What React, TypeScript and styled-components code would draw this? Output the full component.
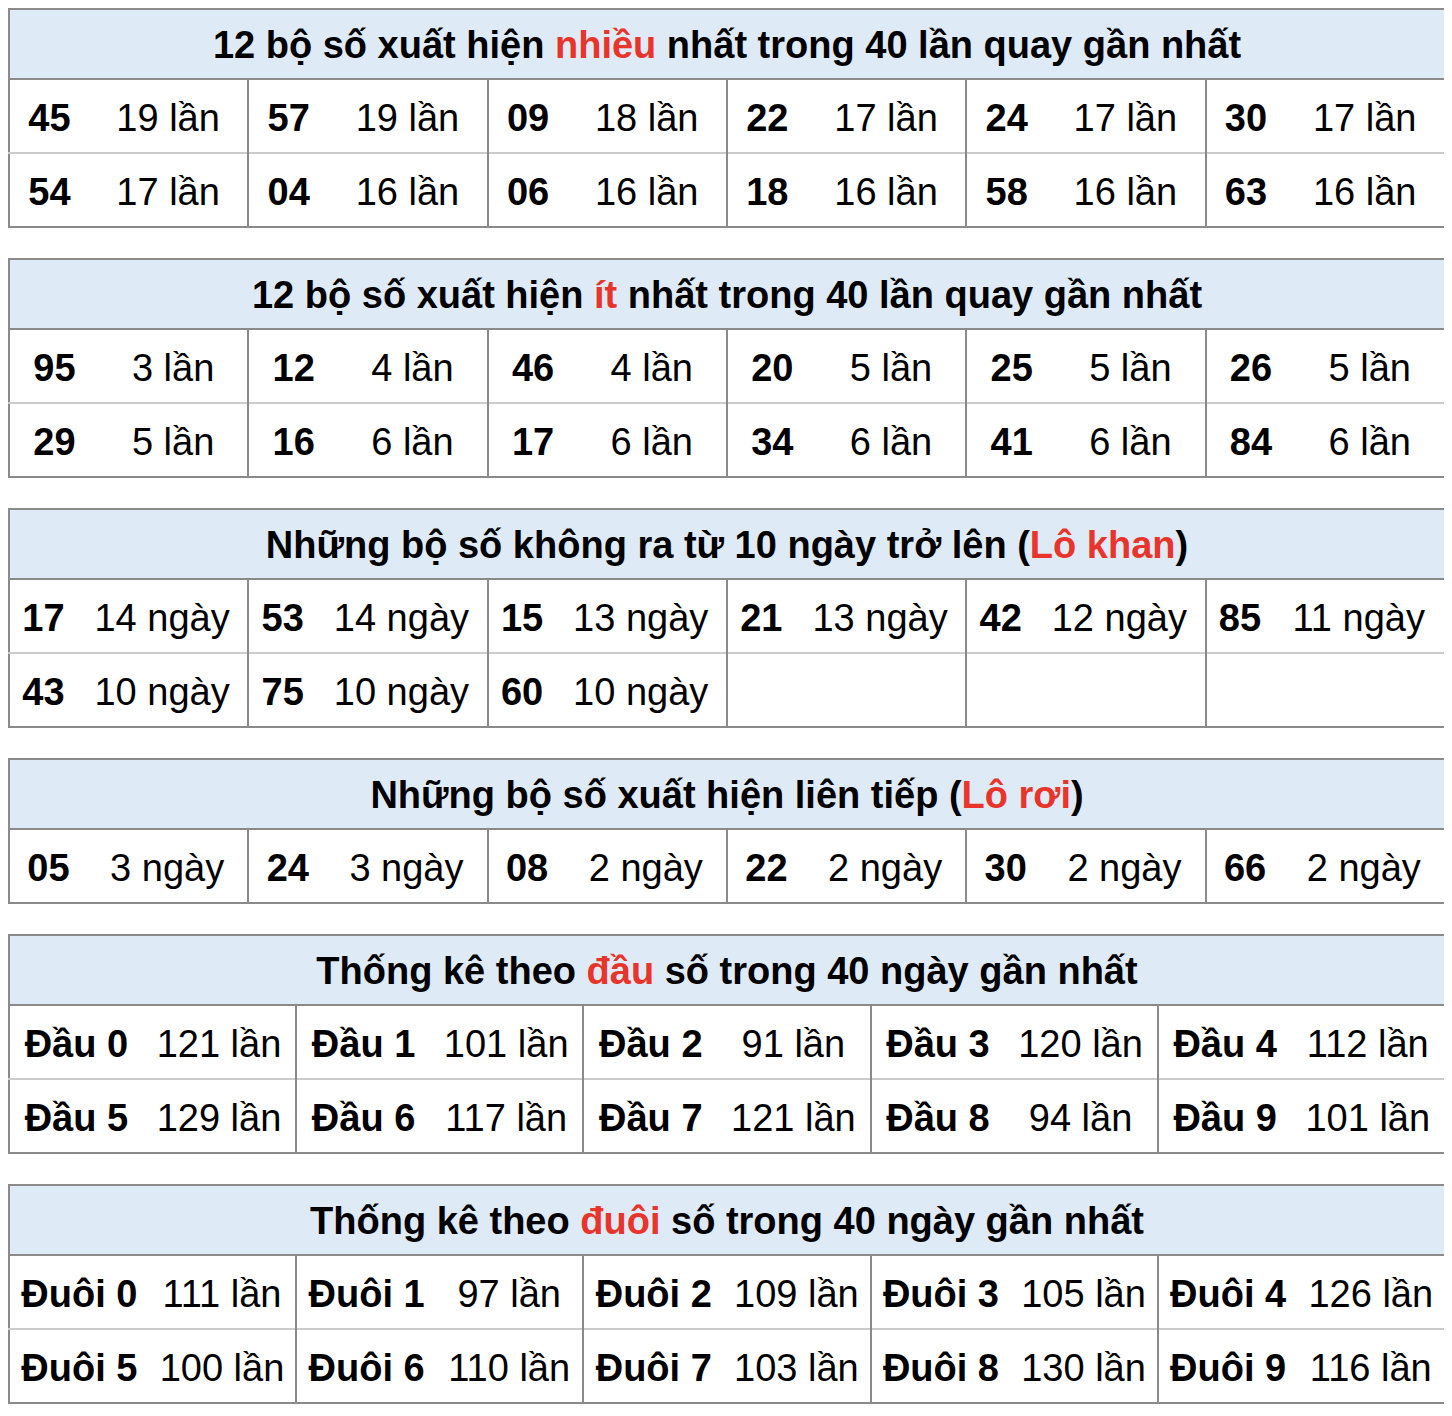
import React from "react";
import styled, { createGlobalStyle } from "styled-components";

const GlobalStyle = createGlobalStyle`
  body {
    margin: 8px;
    background: #ffffff;
    font-family: "Liberation Sans", Arial, sans-serif;
    color: #000000;
  }
`;

type Entry = [string, string] | null;

interface StatTable {
  before: string;
  red: string;
  after: string;
  numWidth: number; // px of the group given to the number cell
  rows: Entry[][];
}

const lan = (n: number) => `${n} lần`;
const ngay = (n: number) => `${n} ngày`;

const tables: StatTable[] = [
  {
    before: "12 bộ số xuất hiện ",
    red: "nhiều",
    after: " nhất trong 40 lần quay gần nhất",
    numWidth: 80,
    rows: [
      [["45", lan(19)], ["57", lan(19)], ["09", lan(18)], ["22", lan(17)], ["24", lan(17)], ["30", lan(17)]],
      [["54", lan(17)], ["04", lan(16)], ["06", lan(16)], ["18", lan(16)], ["58", lan(16)], ["63", lan(16)]],
    ],
  },
  {
    before: "12 bộ số xuất hiện ",
    red: "ít",
    after: " nhất trong 40 lần quay gần nhất",
    numWidth: 90,
    rows: [
      [["95", lan(3)], ["12", lan(4)], ["46", lan(4)], ["20", lan(5)], ["25", lan(5)], ["26", lan(5)]],
      [["29", lan(5)], ["16", lan(6)], ["17", lan(6)], ["34", lan(6)], ["41", lan(6)], ["84", lan(6)]],
    ],
  },
  {
    before: "Những bộ số không ra từ 10 ngày trở lên (",
    red: "Lô khan",
    after: ")",
    numWidth: 68,
    rows: [
      [["17", ngay(14)], ["53", ngay(14)], ["15", ngay(13)], ["21", ngay(13)], ["42", ngay(12)], ["85", ngay(11)]],
      [["43", ngay(10)], ["75", ngay(10)], ["60", ngay(10)], null, null, null],
    ],
  },
  {
    before: "Những bộ số xuất hiện liên tiếp (",
    red: "Lô rơi",
    after: ")",
    numWidth: 78,
    rows: [
      [["05", ngay(3)], ["24", ngay(3)], ["08", ngay(2)], ["22", ngay(2)], ["30", ngay(2)], ["66", ngay(2)]],
    ],
  },
  {
    before: "Thống kê theo ",
    red: "đầu",
    after: " số trong 40 ngày gần nhất",
    numWidth: 134,
    rows: [
      [["Đầu 0", lan(121)], ["Đầu 1", lan(101)], ["Đầu 2", lan(91)], ["Đầu 3", lan(120)], ["Đầu 4", lan(112)]],
      [["Đầu 5", lan(129)], ["Đầu 6", lan(117)], ["Đầu 7", lan(121)], ["Đầu 8", lan(94)], ["Đầu 9", lan(101)]],
    ],
  },
  {
    before: "Thống kê theo ",
    red: "đuôi",
    after: " số trong 40 ngày gần nhất",
    numWidth: 140,
    rows: [
      [["Đuôi 0", lan(111)], ["Đuôi 1", lan(97)], ["Đuôi 2", lan(109)], ["Đuôi 3", lan(105)], ["Đuôi 4", lan(126)]],
      [["Đuôi 5", lan(100)], ["Đuôi 6", lan(110)], ["Đuôi 7", lan(103)], ["Đuôi 8", lan(130)], ["Đuôi 9", lan(116)]],
    ],
  },
];

const TOTAL = 1438;

const App: React.FC = () => {
  return (
    <Page>
      <GlobalStyle />
      {tables.map((t, i) => {
        const groups = t.rows[0].length;
        const groupWidth = TOTAL / groups;
        const numPct = (t.numWidth / TOTAL) * 100;
        const countPct = ((groupWidth - t.numWidth) / TOTAL) * 100;
        return (
          <Table key={i}>
            <colgroup>
              {t.rows[0].map((_, g) => (
                <React.Fragment key={g}>
                  <Col $pct={numPct} />
                  <Col $pct={countPct} />
                </React.Fragment>
              ))}
            </colgroup>
            <thead>
              <tr>
                <Heading colSpan={groups * 2}>
                  {t.before}
                  <Red>{t.red}</Red>
                  {t.after}
                </Heading>
              </tr>
            </thead>
            <tbody>
              {t.rows.map((row, r) => (
                <Row key={r}>
                  {row.map((cell, c) => (
                    <React.Fragment key={c}>
                      <NumCell>{cell ? cell[0] : ""}</NumCell>
                      <CountCell $last={c === row.length - 1}>
                        {cell ? cell[1] : ""}
                      </CountCell>
                    </React.Fragment>
                  ))}
                </Row>
              ))}
            </tbody>
          </Table>
        );
      })}
    </Page>
  );
};
export default App;

const Page = styled.div`
  display: flex;
  flex-direction: column;
  gap: 30px;
  width: 1438px;
`;

const Table = styled.table`
  width: 100%;
  table-layout: fixed;
  border-collapse: collapse;
  border: 2px solid #8a8a8a;
  font-size: 38px;
`;

const Col = styled.col<{ $pct: number }>`
  width: ${(p) => p.$pct}%;
`;

const Heading = styled.th`
  background: #deebf7;
  font-weight: bold;
  text-align: center;
  padding: 14px 0 12px;
  line-height: 42px;
  border-bottom: 2px solid #8a8a8a;
  white-space: nowrap;
`;

const Red = styled.span`
  color: #e8342a;
`;

const Row = styled.tr`
  & + & td {
    border-top: 2px solid #cccccc;
  }
`;

const NumCell = styled.td`
  font-weight: bold;
  text-align: center;
  padding: 17px 0 13px;
  line-height: 42px;
  white-space: nowrap;
`;

const CountCell = styled.td<{ $last: boolean }>`
  text-align: center;
  padding: 17px 0 13px;
  line-height: 42px;
  white-space: nowrap;
  border-right: ${(p) => (p.$last ? "none" : "2px solid #8a8a8a")};
`;
